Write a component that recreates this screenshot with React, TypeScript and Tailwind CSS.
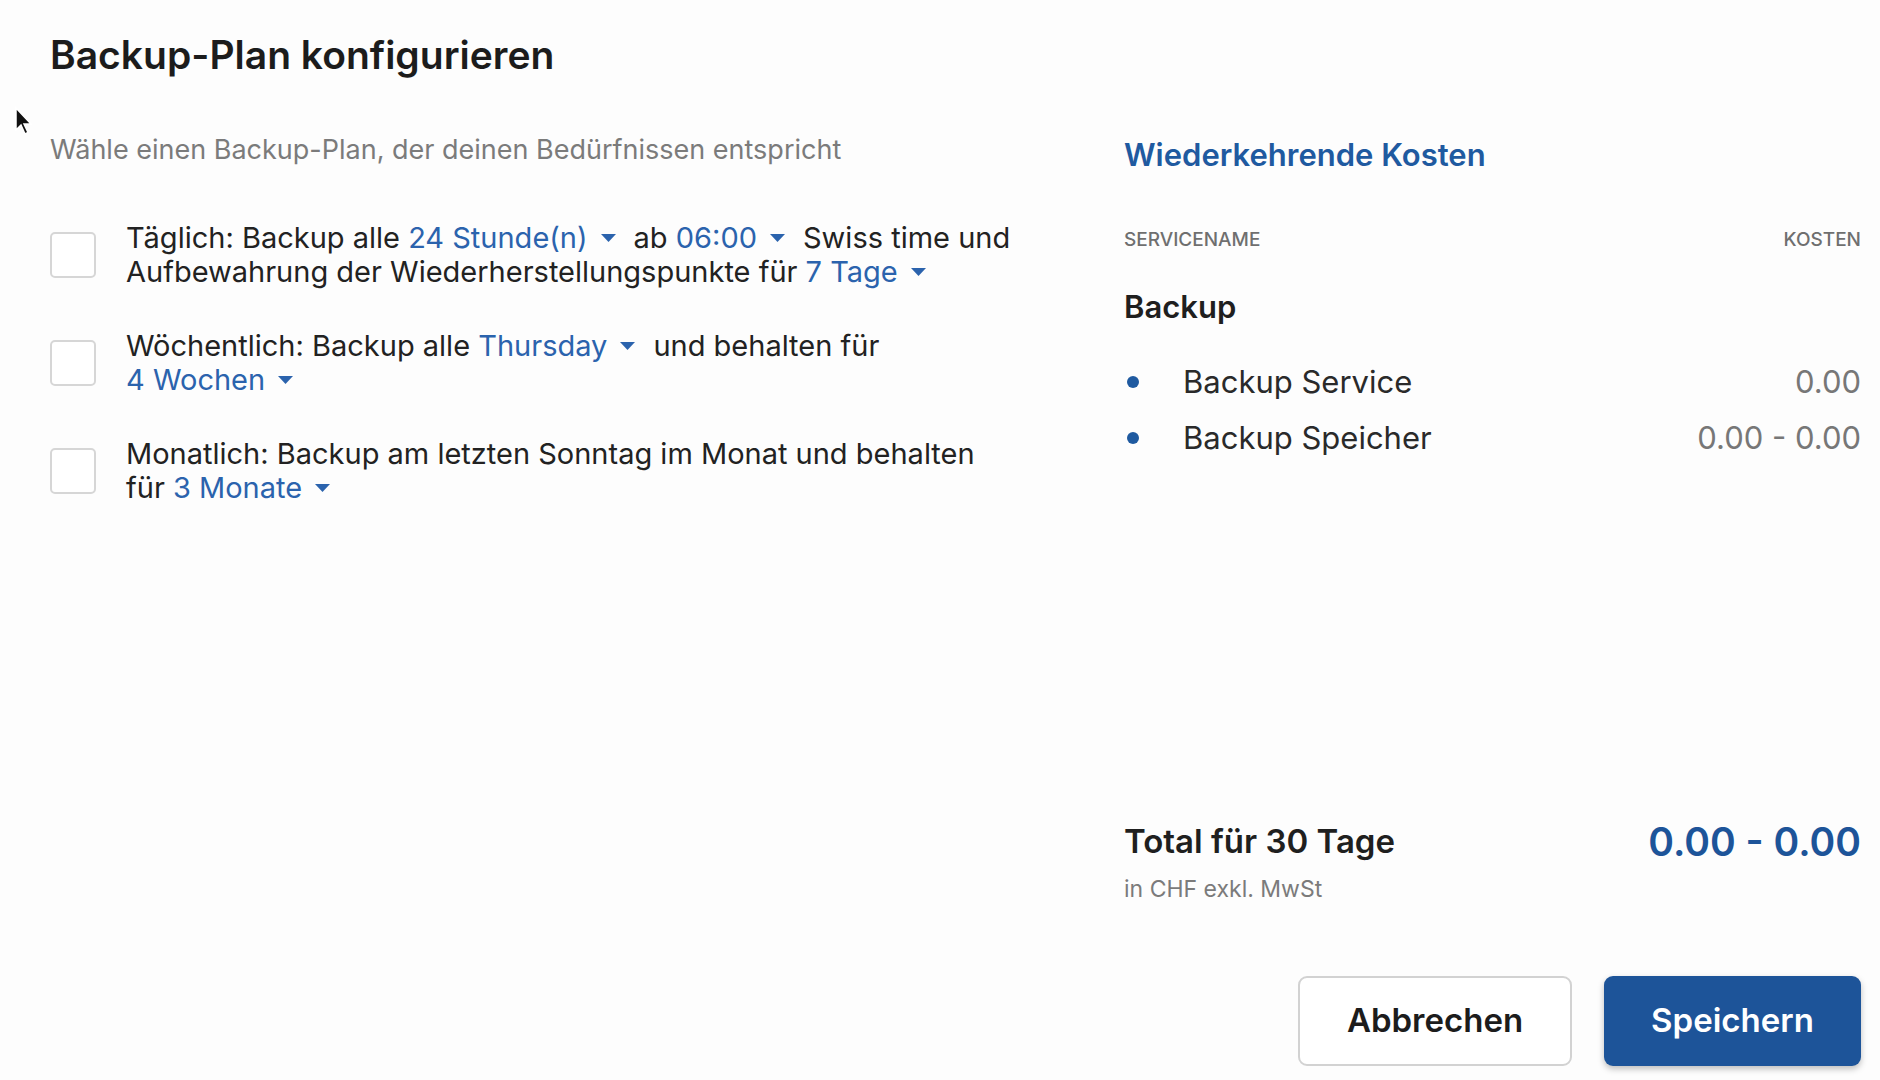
import React from "react";

const Caret = () => (
    <svg width="15" height="8" viewBox="0 0 15 8" className="inline-block ml-[13px] mr-[18px] align-middle relative -top-[2px]">
        <path d="M0 0 L15 0 L7.5 8 Z" fill="#2b63ad" />
    </svg>
);

function Pick({ children }: { children: React.ReactNode }) {
    return (
        <span className="text-[#2b63ad] whitespace-nowrap">
            {children}
            <Caret />
        </span>
    );
}

function PlanRow({ children }: { children: React.ReactNode }) {
    return (
        <div className="flex items-center gap-[30px]">
            <div className="w-[46px] h-[46px] shrink-0 rounded-[5px] border-2 border-[#d6d6d6] bg-white" />
            <div className="text-[29px] leading-[34px] text-[#222]">{children}</div>
        </div>
    );
}

export default function App() {
    return (
        <div className="relative w-[1880px] h-[1080px] bg-[#fdfdfd] grid grid-cols-[1124px_737px] font-['Inter',sans-serif]">
            {/* mouse pointer */}
            <svg width="22" height="32" viewBox="0 0 22 32" className="absolute left-[14px] top-[106px]">
                <path d="M2 2 L2 24 L7 19 L11 28 L14 26.5 L10 18 L17 18 Z" fill="#111" stroke="#fff" strokeWidth="1.5" />
            </svg>

            <div className="pl-[50px] pt-[32px]">
                <h1 className="text-[39px] leading-[46px] font-semibold text-[#1c1c1c]">
                    Backup-Plan konfigurieren
                </h1>
                <p className="mt-[56px] text-[27px] leading-[32px] text-[#7b7b7b]">
                    Wähle einen Backup-Plan, der deinen Bedürfnissen entspricht
                </p>

                <div className="mt-[55px] flex flex-col gap-[40px]">
                    <PlanRow>
                        Täglich: Backup alle <Pick>24 Stunde(n)</Pick>ab <Pick>06:00</Pick>Swiss time und
                        <br />
                        Aufbewahrung der Wiederherstellungspunkte für <Pick>7 Tage</Pick>
                    </PlanRow>
                    <PlanRow>
                        Wöchentlich: Backup alle <Pick>Thursday</Pick>und behalten für
                        <br />
                        <Pick>4 Wochen</Pick>
                    </PlanRow>
                    <PlanRow>
                        Monatlich: Backup am letzten Sonntag im Monat und behalten
                        <br />
                        für <Pick>3 Monate</Pick>
                    </PlanRow>
                </div>
            </div>

            <div className="flex flex-col pt-[137px]">
                <h2 className="text-[31px] leading-[36px] font-semibold text-[#1f5aa0]">Wiederkehrende Kosten</h2>

                <div className="mt-[55px] flex justify-between text-[19px] leading-[24px] font-medium text-[#6f6f6f]">
                    <span>SERVICENAME</span>
                    <span>KOSTEN</span>
                </div>

                <div className="mt-[38px] text-[31px] leading-[34px] font-semibold text-[#1f1f1f]">Backup</div>

                <ul className="mt-[40px] flex flex-col gap-[20px] text-[31px] leading-[36px]">
                    <li className="flex items-center">
                        <span className="w-[12px] h-[12px] rounded-full bg-[#1f5aa0] ml-[3px]" />
                        <span className="ml-[44px] text-[#2a2a2a]">Backup Service</span>
                        <span className="ml-auto text-[#777]">0.00</span>
                    </li>
                    <li className="flex items-center">
                        <span className="w-[12px] h-[12px] rounded-full bg-[#1f5aa0] ml-[3px]" />
                        <span className="ml-[44px] text-[#2a2a2a]">Backup Speicher</span>
                        <span className="ml-auto text-[#777]">0.00 - 0.00</span>
                    </li>
                </ul>

                <div className="mt-auto">
                    <div className="flex items-center justify-between h-[44px]">
                        <span className="text-[33px] font-semibold text-[#1f1f1f]">Total für 30 Tage</span>
                        <span className="text-[39px] font-semibold text-[#1d5499]">0.00 - 0.00</span>
                    </div>
                    <div className="mt-[11px] text-[23px] leading-[28px] text-[#7b7b7b]">in CHF exkl. MwSt</div>

                    <div className="mt-[73px] mb-[14px] flex justify-end gap-[32px]">
                        <button className="w-[274px] h-[90px] rounded-[9px] border-2 border-[#d2d2d2] bg-white text-[33px] font-semibold text-[#1c1c1c]">
                            Abbrechen
                        </button>
                        <button className="w-[257px] h-[90px] rounded-[9px] bg-[#1d5499] text-[33px] font-semibold text-white shadow-[0_3px_6px_rgba(0,0,0,0.25)]">
                            Speichern
                        </button>
                    </div>
                </div>
            </div>
        </div>
    );
}
